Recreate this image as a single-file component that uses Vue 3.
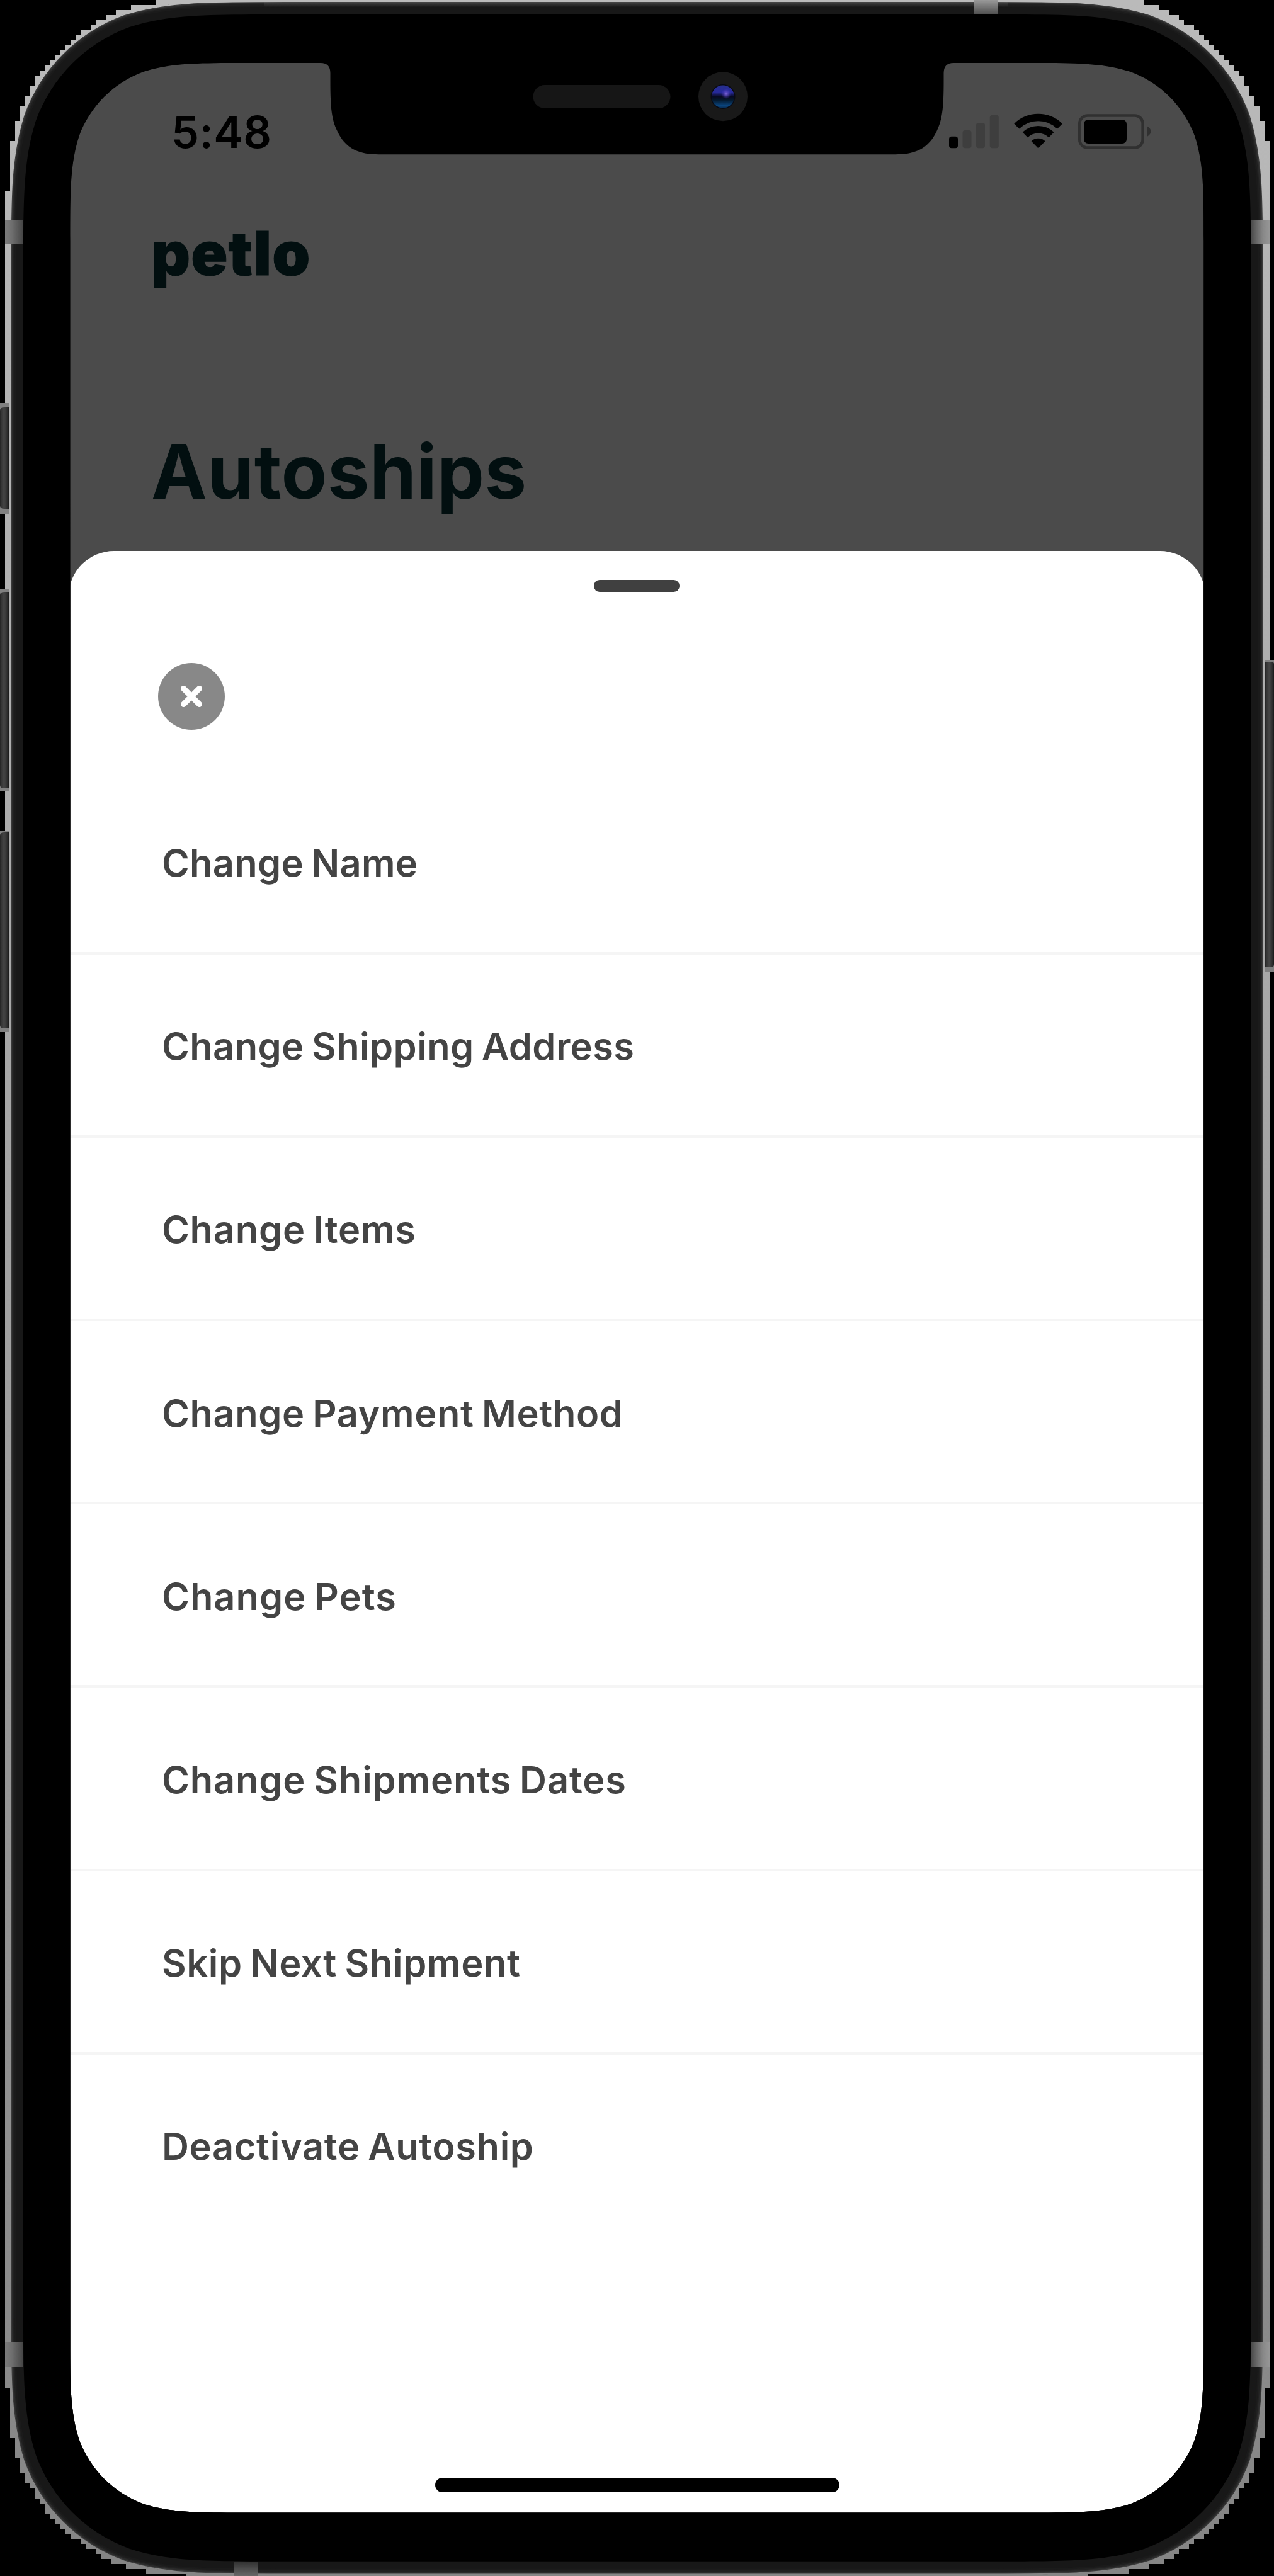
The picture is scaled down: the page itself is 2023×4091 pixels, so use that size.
<script setup>
const actions = [
  { label: 'Change Name', width: 406 },
  { label: 'Change Shipping Address', width: 750 },
  { label: 'Change Items', width: 403 },
  { label: 'Change Payment Method', width: 732 },
  { label: 'Change Pets', width: 372 },
  { label: 'Change Shipments Dates', width: 737 },
  { label: 'Skip Next Shipment', width: 569 },
  { label: 'Deactivate Autoship', width: 590 },
]

// Continuous-curvature corner, in units of the radius, measured from the corner.
const K = [1.5287, 1.0885, 0.8684, 0.6315, 0.0749, 0.3728, 0.1691]

function squircle(x0, y0, x1, y1, r) {
  const [a, b, c, d, e, f, g] = K.map((k) => k * r)
  return (
    `M${x0 + a} ${y0}H${x1 - a}` +
    `C${x1 - b} ${y0} ${x1 - c} ${y0} ${x1 - d} ${y0 + e}` +
    `C${x1 - f} ${y0 + g} ${x1 - g} ${y0 + f} ${x1 - e} ${y0 + d}` +
    `C${x1} ${y0 + c} ${x1} ${y0 + b} ${x1} ${y0 + a}` +
    `V${y1 - a}` +
    `C${x1} ${y1 - b} ${x1} ${y1 - c} ${x1 - e} ${y1 - d}` +
    `C${x1 - g} ${y1 - f} ${x1 - f} ${y1 - g} ${x1 - d} ${y1 - e}` +
    `C${x1 - c} ${y1} ${x1 - b} ${y1} ${x1 - a} ${y1}` +
    `H${x0 + a}` +
    `C${x0 + b} ${y1} ${x0 + c} ${y1} ${x0 + d} ${y1 - e}` +
    `C${x0 + f} ${y1 - g} ${x0 + g} ${y1 - f} ${x0 + e} ${y1 - d}` +
    `C${x0} ${y1 - c} ${x0} ${y1 - b} ${x0} ${y1 - a}` +
    `V${y0 + a}` +
    `C${x0} ${y0 + b} ${x0} ${y0 + c} ${x0 + e} ${y0 + d}` +
    `C${x0 + g} ${y0 + f} ${x0 + f} ${y0 + g} ${x0 + d} ${y0 + e}` +
    `C${x0 + c} ${y0} ${x0 + b} ${y0} ${x0 + a} ${y0}Z`
  )
}

const body = squircle(16.5, 2, 2006.5, 4088.5, 285)
const bezel = squircle(37, 23, 1986.3, 4067.7, 267)
const display = squircle(111.5, 100, 1911.3, 3990.5, 185)

// Stepped outer rim of the case: [x, y] of each step on the left side.
const topSteps = [
  [8, 304], [16, 224], [24, 192], [32, 168], [40, 152], [48, 136], [56, 120],
  [64, 112], [72, 104], [80, 96], [88, 88], [96, 80], [104, 72], [112, 64],
  [120, 56], [128, 48], [144, 40], [152, 32], [168, 24], [184, 16], [208, 8], [248, 0],
]
const bottomSteps = [
  [8, 3792], [16, 3872], [24, 3904], [32, 3928], [40, 3944], [48, 3952], [56, 3968],
  [64, 3976], [72, 3992], [80, 4000], [88, 4008], [96, 4016], [104, 4024], [112, 4032],
  [128, 4040], [136, 4048], [152, 4056], [160, 4064], [176, 4072], [200, 4080],
  [232, 4088], [296, 4091],
]

function rimOutline() {
  const mirror = (x) => 2024 - x
  const last = topSteps.length - 1
  const topLeft = topSteps.map(([x, y]) => `H${x}V${y}`).join('')
  let topRight = `H${mirror(topSteps[last][0])}`
  for (let i = last; i >= 0; i--) {
    topRight += `V${topSteps[i][1]}H${mirror(topSteps[Math.max(i - 1, 0)][0])}`
  }
  const bottomRight = bottomSteps.map(([x, y]) => `H${mirror(x)}V${y}`).join('')
  const bottomLeft = [...bottomSteps].reverse().map(([x, y], i, all) => {
    const next = all[i + 1]
    return `H${x}` + (next ? `V${next[1]}` : '')
  }).join('')
  return `M8 2000${topLeft}${topRight}V3700${bottomRight}${bottomLeft}Z`
}
const rim = rimOutline()

const edgeStrokes = [
  { w: 18, c: '#1b1b1b' },
  { w: 13, c: '#202020' },
  { w: 9, c: '#2a2a2a' },
  { w: 5, c: '#3a3a3a' },
]
const leftKeys = [
  { y: 640, h: 176, by: 647, bh: 161 },
  { y: 936, h: 320, by: 940, bh: 312 },
  { y: 1320, h: 319, by: 1322, bh: 311 },
]
const bars = [
  { x: 1507, y: 216.7, on: true },
  { x: 1528.5, y: 207, on: false },
  { x: 1550, y: 195, on: false },
  { x: 1571.8, y: 182.7, on: false },
]
</script>

<template>
  <div class="device">
    <main class="screen">
      <header class="page">
        <div class="status">
          <span class="clock">5:48</span>
          <svg class="indicators" width="340" height="60" viewBox="1500 178 340 60">
            <rect v-for="b in bars" :key="b.x" :x="b.x" :y="b.y" width="14" :height="235.3 - b.y" rx="4" :fill="b.on ? '#000' : '#3e3e3e'" />
            <g transform="translate(1648.6 235.5)">
              <path d="M-34.3 -35A49 49 0 0 1 34.3 -35" fill="none" stroke="#000" stroke-width="11.5" />
              <path d="M-20.9 -21.3A29.8 29.8 0 0 1 20.9 -21.3" fill="none" stroke="#000" stroke-width="11.5" />
              <path d="M0 0L-11 -11.3A16 16 0 0 1 11 -11.3Z" />
            </g>
            <rect x="1714.2" y="183.4" width="100.4" height="51.2" rx="13" fill="none" stroke="#303030" stroke-width="4.5" />
            <rect x="1721" y="190" width="68" height="38" rx="7" />
            <path d="M1821 200Q1827.6 204 1827.6 208.6T1821 217.4Z" fill="#303030" />
          </svg>
        </div>
        <div class="brand">petlo</div>
        <h1 class="title">Autoships</h1>
      </header>

      <section class="sheet">
        <div class="handle"></div>
        <button class="close" aria-label="Close">
          <svg width="36" height="36" viewBox="0 0 36 36">
            <path d="M5.500 5.500L30.500 30.500M30.500 5.500L5.500 30.500" stroke="#fff" stroke-width="9" stroke-linecap="round" />
          </svg>
        </button>
        <ul class="actions">
          <li v-for="a in actions" :key="a.label" class="action">
            <svg class="label" width="900" height="80">
              <text x="0" y="63.5" :textLength="a.width">{{ a.label }}</text>
            </svg>
          </li>
        </ul>
        <div class="home"></div>
      </section>
    </main>

    <svg class="frame" width="2023" height="4091" viewBox="0 0 2023 4091" fill="none">
      <defs>
        <linearGradient id="rimShade" x1="0" y1="0" x2="0" y2="1">
          <stop offset="0" stop-color="#bababa" />
          <stop offset="0.3" stop-color="#adadad" />
          <stop offset="1" stop-color="#858585" />
        </linearGradient>
        <linearGradient id="keyShade" x1="0" y1="0" x2="1" y2="0">
          <stop offset="0" stop-color="#242424" />
          <stop offset="0.2" stop-color="#383838" />
          <stop offset="0.45" stop-color="#454545" />
          <stop offset="0.75" stop-color="#333" />
          <stop offset="1" stop-color="#1a1a1a" />
        </linearGradient>
        <linearGradient id="bandLeft" x1="0" y1="0" x2="1" y2="0">
          <stop offset="0" stop-color="#7a7a7a" />
          <stop offset="0.35" stop-color="#707070" />
          <stop offset="1" stop-color="#444" />
        </linearGradient>
        <linearGradient id="bandRight" x1="1" y1="0" x2="0" y2="0">
          <stop offset="0" stop-color="#969696" />
          <stop offset="0.35" stop-color="#888" />
          <stop offset="1" stop-color="#484848" />
        </linearGradient>
        <linearGradient id="bandTop" x1="0" y1="0" x2="0" y2="1">
          <stop offset="0" stop-color="#999" />
          <stop offset="1" stop-color="#505050" />
        </linearGradient>
        <linearGradient id="bandBottom" x1="0" y1="0" x2="0" y2="1">
          <stop offset="0" stop-color="#303030" />
          <stop offset="1" stop-color="#686868" />
        </linearGradient>
        <linearGradient id="topEdge" x1="0" y1="0" x2="0" y2="1">
          <stop offset="0" stop-color="#4c4c4c" />
          <stop offset="1" stop-color="#1a1a1a" />
        </linearGradient>
        <linearGradient id="lens" x1="0" y1="0" x2="0" y2="1">
          <stop offset="0" stop-color="#262f8c" />
          <stop offset="0.3" stop-color="#272a9c" />
          <stop offset="0.5" stop-color="#070a22" />
          <stop offset="0.65" stop-color="#04182c" />
          <stop offset="0.9" stop-color="#0b4680" />
          <stop offset="1" stop-color="#082b50" />
        </linearGradient>
        <radialGradient id="glint">
          <stop offset="0" stop-color="#7c63d8" />
          <stop offset="1" stop-color="#4a37c0" stop-opacity="0" />
        </radialGradient>
        <clipPath id="bodyClip"><path :d="body" /></clipPath>
      </defs>

      <path :d="`M0 0H2023V4091H0Z${display}`" fill="#000" fill-rule="evenodd" />
      <path :d="`${rim}${display}`" fill="url(#rimShade)" fill-rule="evenodd" />
      <path :d="`${body}${display}`" fill="#181818" fill-rule="evenodd" />
      <g clip-path="url(#bodyClip)">
        <path v-for="s in edgeStrokes" :key="s.w" :d="body" :stroke="s.c" :stroke-width="s.w" />
        <rect x="420" y="2" width="1180" height="9" fill="url(#topEdge)" />
      </g>
      <path :d="body" stroke="url(#rimShade)" stroke-width="2" />
      <path :d="`${bezel}${display}`" fill="#000" fill-rule="evenodd" />

      <rect x="8" y="349" width="29" height="39" fill="url(#bandLeft)" />
      <rect x="8" y="3720" width="29" height="39" fill="url(#bandLeft)" />
      <rect x="1986" y="349" width="30" height="39" fill="url(#bandRight)" />
      <rect x="1986" y="3720" width="30" height="39" fill="url(#bandRight)" />
      <rect x="1546" y="0" width="39" height="22.5" fill="url(#bandTop)" />
      <rect x="371" y="4068" width="39" height="23" fill="url(#bandBottom)" />

      <g v-for="k in leftKeys" :key="k.y">
        <rect x="0" :y="k.y" width="14" :height="k.h" fill="#808080" />
        <path :d="`M14 ${k.by}H7Q0 ${k.by} 0 ${k.by + 5}V${k.by + k.bh - 5}Q0 ${k.by + k.bh} 7 ${k.by + k.bh}H14Z`" fill="url(#keyShade)" />
      </g>
      <rect x="2009" y="1048" width="14" height="496" fill="#808080" />
      <path d="M2009 1051H2019Q2023 1051 2023 1055V1531Q2023 1536 2019 1536H2009Z" fill="url(#keyShade)" />

      <path
        d="M508 99H1514V100Q1498.500 100 1498.500 116V128C1498.500 172 1496 190 1488 207C1478 229 1463 241 1437 244.500C1428 245.300 1418 245.300 1400 245.300H623C605 245.300 595 245.300 586 244.500C560 241 545 229 535 207C527 190 524.500 172 524.500 128V116Q524.500 100 509 100Z"
        fill="#000"
      />
      <rect x="846.500" y="135" width="218" height="37" rx="18.500" fill="#161616" />
      <circle cx="1148" cy="153.300" r="39" fill="#191919" />
      <circle cx="1148" cy="153.500" r="19.500" fill="#080a14" />
      <circle cx="1148" cy="153.500" r="18" fill="url(#lens)" />
      <circle cx="1153" cy="149" r="8" fill="url(#glint)" />
    </svg>
  </div>
</template>

<style>
body {
  margin: 0;
  background: #000;
}
</style>

<style scoped>
.device {
  position: relative;
  width: 2023px;
  height: 4091px;
  overflow: hidden;
  background: #000;
  font-family: Inter, "Liberation Sans", sans-serif;
}
.frame {
  position: absolute;
  inset: 0;
  pointer-events: none;
}
.screen {
  display: flex;
  flex-direction: column;
  box-sizing: border-box;
  height: 3892px;
  margin: 99px 111px 0;
  overflow: hidden;
  background: #4b4b4b;
}
.page {
  flex: none;
  height: 775.5px;
}
.status {
  display: flex;
  justify-content: space-between;
  padding: 79px 72px 0 161px;
  height: 60px;
}
.clock {
  font-size: 70px;
  line-height: 64px;
  height: 60px;
  font-weight: 600;
  letter-spacing: 0.4px;
}
.indicators {
  flex: none;
}
.brand {
  margin: 106px 0 0 129px;
  font-size: 96px;
  line-height: 116px;
  font-weight: 900;
  color: #020f10;
  letter-spacing: 1.2px;
  -webkit-text-stroke: 1px #020f10;
}
.title {
  margin: 217px 0 0 129px;
  font-size: 119px;
  line-height: 144px;
  font-weight: 700;
  color: #020f10;
  letter-spacing: 0.4px;
}
.sheet {
  display: flex;
  flex-direction: column;
  flex: none;
  height: 3120px;
  margin: 0 -2px;
  border-radius: 72px 72px 0 0;
  background: #fff;
}
.handle {
  align-self: center;
  width: 136px;
  height: 19px;
  margin: 46px 1px 0 0;
  border-radius: 9px;
  background: #404040;
}
.close {
  display: flex;
  align-items: center;
  justify-content: center;
  width: 106px;
  height: 106px;
  margin: 113px 0 0 142px;
  padding: 0;
  border: 0;
  border-radius: 50%;
  background: #888;
}
.actions {
  margin: 66px 0 0;
  padding: 0;
  list-style: none;
}
.action {
  box-sizing: border-box;
  display: flex;
  align-items: center;
  height: 291.2px;
  padding-left: 148px;
  border-bottom: 4px solid #f5f5f5;
}
.action:last-child {
  border-bottom-color: transparent;
}
.label {
  font-size: 59.5px;
  font-weight: 600;
  fill: #444;
  word-spacing: -3px;
}
.home {
  align-self: center;
  width: 642px;
  height: 23px;
  margin-top: 381px;
  border-radius: 12px;
  background: #000;
}
</style>
